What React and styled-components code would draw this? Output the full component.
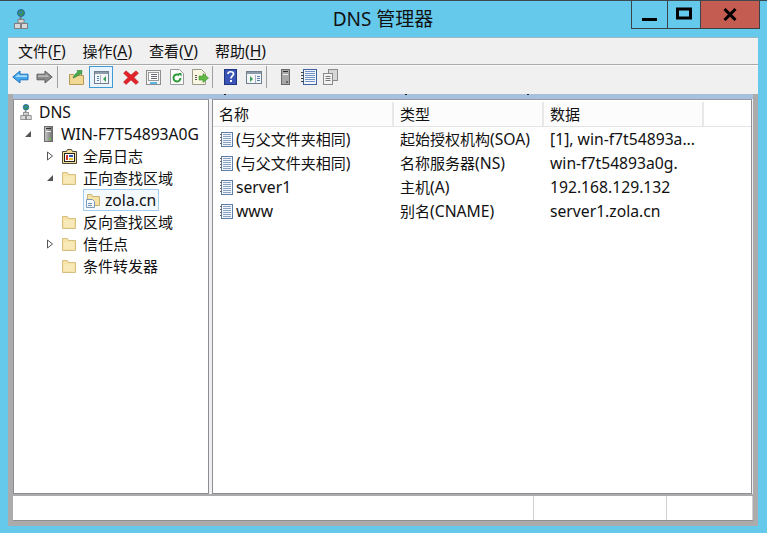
import React from "react";
import styled, { createGlobalStyle } from "styled-components";

const GlobalStyle = createGlobalStyle`
  html, body { margin: 0; padding: 0; }
  body {
    width: 767px;
    height: 533px;
    overflow: hidden;
    font-family: "Noto Sans", "Noto Sans CJK SC", sans-serif;
    color: #111;
  }
`;

const Win = styled.div`
  width: 767px;
  height: 533px;
  box-sizing: border-box;
  background: #65c9eb;
  border-top: 1px solid #3c4a50;
  display: flex;
  flex-direction: column;
`;

const TitleBar = styled.div`
  height: 36px;
  display: grid;
  grid-template-columns: 1fr auto 1fr;
  align-items: flex-start;
  padding-left: 14px;
`;

const TitleIcon = styled.div`
  padding-top: 8px;
`;

const Title = styled.div`
  font-size: 19px;
  line-height: 26px;
  padding-top: 5px;
  color: #111;
  margin-left: -15px;
`;

const Controls = styled.div`
  justify-self: end;
  margin-right: 7px;
  display: flex;
  height: 27px;
  border: 1px solid #3a4448;
  border-top: 0;
`;

const Control = styled.div`
  width: ${(p) => p.$w}px;
  display: flex;
  align-items: center;
  justify-content: center;
  background: ${(p) => p.$bg || "transparent"};
  border-left: ${(p) => (p.$first ? "0" : "1px solid #3a4448")};
`;

const Client = styled.div`
  width: 750px;
  margin-left: 8px;
  border-top: 1px solid #9ab8c6;
  background: #f0f0f0;
  display: flex;
  flex-direction: column;
  height: 488px;
`;

const MenuBar = styled.div`
  height: 27px;
  box-sizing: border-box;
  display: flex;
  align-items: center;
  gap: 17px;
  padding-left: 10px;
  font-size: 15px;
  border-bottom: 1px solid #aaa;
`;

const MenuItem = styled.span`
  u { text-underline-offset: 2px; }
`;

const Latin = styled.span`
  font-size: 15.7px;
`;

const Toolbar = styled.div`
  height: 29px;
  display: flex;
  align-items: flex-start;
  padding-left: 4px;
  border-top: 1px solid #fafafa;
  box-sizing: border-box;
`;

const Tool = styled.div`
  width: ${(p) => p.$w}px;
  height: 22px;
  margin-left: ${(p) => p.$ml || 0}px;
  display: flex;
  align-items: center;
  justify-content: center;
  box-sizing: border-box;
  border: ${(p) => (p.$active ? "1px solid #3f9ad6" : "0")};
  background: ${(p) => (p.$active ? "#e8f3fb" : "transparent")};
`;

const ToolSep = styled.div`
  width: 1px;
  height: 22px;
  background: #a0a0a0;
  margin-left: ${(p) => p.$ml || 0}px;
`;

const Workspace = styled.div`
  flex: 1;
  background: #ababab;
  display: flex;
  flex-direction: column;
  padding: 0 5px 5px;
`;

const BlueStrip = styled.div`
  height: 5px;
  background: #a6c0de;
  position: relative;
`;

const Tick = styled.span`
  position: absolute;
  top: 0;
  left: ${(p) => p.$left}px;
  width: 2px;
  height: 1px;
  background: #222;
`;

const Panes = styled.div`
  height: 395px;
  display: flex;
  gap: 3px;
  background: #f0f0f0;
`;

const Pane = styled.div`
  width: ${(p) => p.$w}px;
  background: #fff;
  box-sizing: border-box;
  border: 1px solid #8d8d96;
  border-top-color: #9a9aa2;
  overflow: hidden;
`;

const TreeList = styled.div`
  padding-top: 1px;
`;

const TreeRow = styled.div`
  height: 22px;
  display: flex;
  align-items: center;
  padding-left: ${(p) => p.$indent}px;
  font-size: 15px;
  line-height: 22px;
  white-space: nowrap;
`;

const Expander = styled.span`
  width: ${(p) => p.$w || 16}px;
  flex: none;
  display: flex;
  align-items: center;
`;

const TreeLabel = styled.span`
  margin-left: ${(p) => p.$gap || 6}px;
`;

const Selected = styled.div`
  height: 22px;
  display: flex;
  align-items: center;
  box-sizing: border-box;
  border: 1px solid #a5cdf0;
  background: #f4f9fe;
  padding: 0 0 0 1px;
  width: 76px;
`;

const HeaderRow = styled.div`
  height: 27px;
  display: flex;
  box-sizing: border-box;
  border-bottom: 1px solid #e4e4e4;
  padding-top: 2px;
`;

const HeaderCell = styled.div`
  width: ${(p) => p.$w}px;
  box-sizing: border-box;
  padding-left: ${(p) => p.$pad}px;
  font-size: 15px;
  line-height: 25px;
  border-right: 2px solid #e8e8e8;
  background: #fcfcfc;
  margin-right: 1px;
`;

const ListRow = styled.div`
  height: 24px;
  display: flex;
  align-items: center;
  font-size: 15px;
  line-height: 24px;
  white-space: nowrap;
`;

const ListCell = styled.div`
  width: ${(p) => p.$w}px;
  padding-left: ${(p) => p.$pad}px;
  box-sizing: border-box;
  display: flex;
  align-items: center;
  gap: 3px;
  overflow: hidden;
`;

const StatusBar = styled.div`
  margin-top: 2px;
  height: 24px;
  background: #fff;
  border-bottom: 1px solid #8d8d8d;
  display: flex;
  justify-content: flex-end;
`;

const StatusCell = styled.div`
  width: ${(p) => p.$w}px;
  box-sizing: border-box;
  border-left: 1px solid #d0d0d0;
`;

const Svg = ({ w = 16, h = 16, vw, vh, children }) => (
  <svg width={w} height={h} viewBox={`0 0 ${vw || w} ${vh || h}`} style={{ display: "block", flex: "none" }}>
    {children}
  </svg>
);

const DnsIcon = ({ w = 12, h = 16 }) => (
  <Svg w={w} h={h} vw={14} vh={20}>
    <circle cx="7" cy="4" r="3.500" fill="#2f9a55" stroke="#2f62a8" />
    <path d="M5 2.500h3v2H5z" fill="#3a78d0" />
    <path d="M6.500 8v3" stroke="#777" strokeWidth="2" />
    <rect x="4" y="10.500" width="6" height="3.500" fill="#d9d9d9" stroke="#808080" />
    <rect x="0.500" y="14.500" width="6" height="5" fill="#d9d9d9" stroke="#808080" />
    <rect x="7.500" y="14.500" width="6" height="5" fill="#d9d9d9" stroke="#808080" />
  </Svg>
);

const ServerIcon = () => (
  <Svg w={10} h={16}>
    <defs>
      <linearGradient id="srv" x1="0" x2="1" y1="0" y2="0">
        <stop offset="0" stopColor="#c9c9c9" />
        <stop offset="1" stopColor="#6f6f6f" />
      </linearGradient>
    </defs>
    <rect x="0.500" y="0.500" width="8" height="15" fill="url(#srv)" stroke="#6a6a6a" />
    <rect x="2" y="2" width="5" height="1" fill="#333" />
    <rect x="2" y="5" width="5" height="1" fill="#eee" />
    <rect x="5" y="12" width="2" height="2" fill="#6fbf4a" />
  </Svg>
);

const FolderIcon = () => (
  <Svg w={14} h={14}>
    <path d="M0.500 1.500h5l1 2h7v10H0.500z" fill="#f5e2a4" stroke="#d6bf80" />
    <rect x="2" y="5" width="10" height="7" fill="#f8e9b8" />
  </Svg>
);

const LogIcon = () => (
  <Svg w={15} h={15}>
    <path d="M0.500 2.500h4l1-2h4l1 2h4v12H0.500z" fill="#f3dc95" stroke="#4a4a38" />
    <rect x="2.500" y="4.500" width="10" height="8" fill="#fff" stroke="#222" />
    <rect x="4" y="6" width="2" height="5" fill="#d0342c" />
    <rect x="7" y="6" width="4" height="2" fill="#2a4fb0" />
    <rect x="7" y="9" width="4" height="2" fill="#e4c22e" />
  </Svg>
);

const ZoneIcon = () => (
  <Svg w={15} h={15}>
    <path d="M2.500 1.500h4l1 2h7v9h-12z" fill="#f5e2a4" stroke="#c9b070" />
    <path d="M1.500 6.500h6l2 2v6h-8z" fill="#f7fafd" stroke="#7d9ab8" />
    <path d="M3 10.500h4M3 12.500h4" stroke="#6d8fb5" />
  </Svg>
);

const RecordIcon = () => (
  <Svg w={14} h={15}>
    <rect x="2.500" y="0.500" width="11" height="14" fill="#f2f5fa" stroke="#5e7ea8" />
    <path d="M4 2.500h8M4 4.500h8M4 6.500h8M4 8.500h8M4 10.500h8M4 12.500h8" stroke="#8aa2c4" />
    <path d="M1 2.500h2M1 5.500h2M1 8.500h2M1 11.500h2" stroke="#666" />
  </Svg>
);

const ExpandedArrow = () => (
  <Svg w={8} h={8}>
    <path d="M7 1v6H1z" fill="#555" />
  </Svg>
);

const CollapsedArrow = () => (
  <Svg w={8} h={10}>
    <path d="M1.500 1l5 4-5 4z" fill="#fff" stroke="#555" />
  </Svg>
);

const ArrowBack = () => (
  <Svg w={17} h={14}>
    <path d="M0.800 7L8 1v3.200h8v5.600H8V13z" fill="#45a8e8" stroke="#1e74c0" />
    <path d="M3 7l4-3.300v1.500h8V7z" fill="#a5dafa" />
  </Svg>
);

const ArrowForward = () => (
  <Svg w={17} h={14}>
    <path d="M16.200 7L9 1v3.200H1v5.600h8V13z" fill="#8a8a8a" stroke="#5f5f5f" />
    <path d="M2 5.200h8V3.500L13 7H2z" fill="#b7b7b7" />
  </Svg>
);

const UpIcon = () => (
  <Svg w={15} h={16}>
    <path d="M0.500 5.500h4l1 1h9v9H0.500z" fill="#f0d894" stroke="#b99a55" />
    <path d="M4 9c1-3 3-5 5-6l-1-1.500h5L12.500 6 11.500 4.700C10 6 7 8 4 9z" fill="#49a84a" stroke="#2c7f32" strokeWidth="0.600" />
  </Svg>
);

const PaneLeftIcon = () => (
  <Svg w={15} h={13}>
    <rect x="0.500" y="0.500" width="14" height="12" fill="#f4f6f8" stroke="#6f7f90" />
    <rect x="1" y="1" width="13" height="2" fill="#8c9aa9" />
    <path d="M3 5h2v1H3zM3 7h2v1H3zM3 9h2v1H3z" fill="#4f7fb5" />
    <path d="M6.500 4v8" stroke="#aab4c0" />
    <path d="M12 5v6L9 8z" fill="#38a05a" />
  </Svg>
);

const PaneRightIcon = () => (
  <Svg w={16} h={13}>
    <rect x="0.500" y="0.500" width="15" height="12" fill="#f4f6f8" stroke="#6f7f90" />
    <rect x="1" y="1" width="14" height="2" fill="#8c9aa9" />
    <path d="M4 5v6l3-3z" fill="#38a05a" />
    <path d="M9.500 4v8" stroke="#aab4c0" />
    <path d="M11 5h3v1h-3zM11 7h3v1h-3zM11 9h3v1h-3z" fill="#4f7fb5" />
  </Svg>
);

const DeleteIcon = () => (
  <Svg w={16} h={15}>
    <path d="M3 0.800L8 5l5-4.200 2.500 2.400L11 7.500l4.500 4.500-2.500 2.500L8 10l-5 4.500L0.500 12 5 7.500 0.500 3.200z" fill="#e2242a" stroke="#b01d20" strokeWidth="0.500" />
  </Svg>
);

const PropsIcon = () => (
  <Svg w={15} h={15}>
    <rect x="0.500" y="0.500" width="14" height="14" fill="#f3f3f3" stroke="#8d8d8d" />
    <rect x="2.500" y="2.500" width="10" height="8" fill="#fff" stroke="#9a9a9a" />
    <path d="M5 4.500h6M5 6.500h6M5 8.500h6" stroke="#667" />
    <rect x="4" y="12" width="7" height="2" fill="#5cb5e0" />
  </Svg>
);

const RefreshIcon = () => (
  <Svg w={14} h={16}>
    <path d="M0.500 0.500h9l4 4v11h-13z" fill="#fbfbfb" stroke="#9a9a9a" />
    <path d="M10.500 9a3.500 3.500 0 1 1-1.200-2.700" fill="none" stroke="#2f9a3a" strokeWidth="2" />
    <path d="M8 4l3.500 0 0 3.500z" fill="#2f9a3a" />
  </Svg>
);

const ExportIcon = () => (
  <Svg w={17} h={16}>
    <path d="M0.500 0.500h9l4 4v11h-13z" fill="#faf6e2" stroke="#9a9a8a" />
    <path d="M3 6.500h2M3 8.500h2M3 10.500h2" stroke="#555" />
    <path d="M7 7h4V4.500L16.500 9 11 13.500V11H7z" fill="#63b946" stroke="#3b8d2d" strokeWidth="0.600" />
  </Svg>
);

const HelpIcon = () => (
  <Svg w={13} h={16}>
    <rect x="0.500" y="0.500" width="12" height="15" fill="#3a55b5" stroke="#203480" />
    <path d="M4 5c0-3 5.500-3 5.500 0 0 2-2.500 2-2.500 4.500" fill="none" stroke="#fff" strokeWidth="1.700" />
    <rect x="6" y="11" width="2" height="2" fill="#fff" />
  </Svg>
);

const NewServerIcon = () => (
  <Svg w={10} h={16}>
    <rect x="0.500" y="0.500" width="8" height="15" fill="#a8a8a8" stroke="#6a6a6a" />
    <rect x="2" y="2" width="5" height="1" fill="#333" />
    <rect x="2" y="5" width="5" height="1" fill="#eee" />
    <rect x="5" y="12" width="2" height="2" fill="#666" />
  </Svg>
);

const NotebookIcon = () => (
  <Svg w={16} h={16}>
    <rect x="2.500" y="0.500" width="13" height="15" fill="#f2f6fb" stroke="#3f62a0" />
    <path d="M4 2.500h10M4 4.500h10M4 6.500h10M4 8.500h10M4 10.500h10M4 12.500h10" stroke="#6f93c4" />
    <path d="M0 3.500h3M0 6.500h3M0 9.500h3M0 12.500h3" stroke="#444" />
  </Svg>
);

const CopyIcon = () => (
  <Svg w={15} h={16}>
    <rect x="5.500" y="0.500" width="9" height="11" fill="#d6d6d6" stroke="#8a8a8a" />
    <rect x="0.500" y="4.500" width="9" height="11" fill="#f2f2f2" stroke="#8a8a8a" />
    <path d="M2.500 7.500h5M2.500 9.500h5M2.500 11.500h5" stroke="#777" />
  </Svg>
);

// ascii runs are set a little larger, the latin glyphs in the shot are wider than Noto at the same size
const Mixed = ({ text }) => (
  <span>
    {text.split(/([\x00-\x7f]+)/).filter(Boolean).map((part, i) =>
      /^[\x00-\x7f]+$/.test(part) ? <Latin key={i}>{part}</Latin> : <span key={i}>{part}</span>
    )}
  </span>
);

const menus = [
  ["文件", "F"],
  ["操作", "A"],
  ["查看", "V"],
  ["帮助", "H"],
];

const records = [
  { name: "(与父文件夹相同)", type: "起始授权机构(SOA)", data: "[1], win-f7t54893a..." },
  { name: "(与父文件夹相同)", type: "名称服务器(NS)", data: "win-f7t54893a0g." },
  { name: "server1", type: "主机(A)", data: "192.168.129.132" },
  { name: "www", type: "别名(CNAME)", data: "server1.zola.cn" },
];

export default function App() {
  return (
    <>
      <GlobalStyle />
      <Win>
        <TitleBar>
          <TitleIcon>
            <DnsIcon w={14} h={20} />
          </TitleIcon>
          <Title>DNS 管理器</Title>
          <Controls>
            <Control $w={35} $first>
              <Svg w={15} h={12}>
                <rect x="0" y="9" width="15" height="3" fill="#000" />
              </Svg>
            </Control>
            <Control $w={32}>
              <Svg w={16} h={16}>
                <rect x="1.500" y="2" width="13" height="9" fill="none" stroke="#000" strokeWidth="3" />
              </Svg>
            </Control>
            <Control $w={58} $bg="#c45c52">
              <Svg w={14} h={13}>
                <path d="M1.500 1l11 11M12.500 1l-11 11" stroke="#000" strokeWidth="3" />
              </Svg>
            </Control>
          </Controls>
        </TitleBar>
        <Client>
          <MenuBar>
            {menus.map(([label, key]) => (
              <MenuItem key={key}>
                {label}
                <Latin>
                  (<u>{key}</u>)
                </Latin>
              </MenuItem>
            ))}
          </MenuBar>
          <Toolbar>
            <Tool $w={17}><ArrowBack /></Tool>
            <Tool $w={17} $ml={7}><ArrowForward /></Tool>
            <ToolSep $ml={4} />
            <Tool $w={15} $ml={11}><UpIcon /></Tool>
            <Tool $w={24} $ml={5} $active><PaneLeftIcon /></Tool>
            <Tool $w={16} $ml={10}><DeleteIcon /></Tool>
            <Tool $w={15} $ml={7}><PropsIcon /></Tool>
            <Tool $w={14} $ml={9}><RefreshIcon /></Tool>
            <Tool $w={17} $ml={8}><ExportIcon /></Tool>
            <ToolSep $ml={3} />
            <Tool $w={13} $ml={11}><HelpIcon /></Tool>
            <Tool $w={16} $ml={9}><PaneRightIcon /></Tool>
            <ToolSep $ml={4} />
            <Tool $w={10} $ml={14}><NewServerIcon /></Tool>
            <Tool $w={16} $ml={10}><NotebookIcon /></Tool>
            <Tool $w={15} $ml={6}><CopyIcon /></Tool>
          </Toolbar>
          <Workspace>
            <BlueStrip>
              <Tick $left={211} />
              <Tick $left={392} />
              <Tick $left={514} />
            </BlueStrip>
            <Panes>
              <Pane $w={196}>
                <TreeList>
                  <TreeRow $indent={6}>
                    <DnsIcon />
                    <TreeLabel $gap={7}><Latin>DNS</Latin></TreeLabel>
                  </TreeRow>
                  <TreeRow $indent={10}>
                    <Expander $w={20}><ExpandedArrow /></Expander>
                    <ServerIcon />
                    <TreeLabel $gap={7}><Latin>WIN-F7T54893A0G</Latin></TreeLabel>
                  </TreeRow>
                  <TreeRow $indent={32}>
                    <Expander><CollapsedArrow /></Expander>
                    <LogIcon />
                    <TreeLabel $gap={6}>全局日志</TreeLabel>
                  </TreeRow>
                  <TreeRow $indent={32}>
                    <Expander><ExpandedArrow /></Expander>
                    <FolderIcon />
                    <TreeLabel $gap={7}>正向查找区域</TreeLabel>
                  </TreeRow>
                  <TreeRow $indent={69}>
                    <Selected>
                      <ZoneIcon />
                      <TreeLabel $gap={5}><Latin>zola.cn</Latin></TreeLabel>
                    </Selected>
                  </TreeRow>
                  <TreeRow $indent={48}>
                    <FolderIcon />
                    <TreeLabel $gap={7}>反向查找区域</TreeLabel>
                  </TreeRow>
                  <TreeRow $indent={32}>
                    <Expander><CollapsedArrow /></Expander>
                    <FolderIcon />
                    <TreeLabel $gap={7}>信任点</TreeLabel>
                  </TreeRow>
                  <TreeRow $indent={48}>
                    <FolderIcon />
                    <TreeLabel $gap={7}>条件转发器</TreeLabel>
                  </TreeRow>
                </TreeList>
              </Pane>
              <Pane $w={540}>
                <HeaderRow>
                  <HeaderCell $w={181} $pad={6}>名称</HeaderCell>
                  <HeaderCell $w={149} $pad={5}>类型</HeaderCell>
                  <HeaderCell $w={159} $pad={5}>数据</HeaderCell>
                </HeaderRow>
                {records.map((r) => (
                  <ListRow key={r.name + r.type}>
                    <ListCell $w={181} $pad={6}>
                      <RecordIcon />
                      <Mixed text={r.name} />
                    </ListCell>
                    <ListCell $w={150} $pad={6}>
                      <Mixed text={r.type} />
                    </ListCell>
                    <ListCell $w={200} $pad={6}>
                      <Mixed text={r.data} />
                    </ListCell>
                  </ListRow>
                ))}
              </Pane>
            </Panes>
            <StatusBar>
              <StatusCell $w={133} />
              <StatusCell $w={86} />
              <StatusCell $w={1} />
            </StatusBar>
          </Workspace>
        </Client>
      </Win>
    </>
  );
}
